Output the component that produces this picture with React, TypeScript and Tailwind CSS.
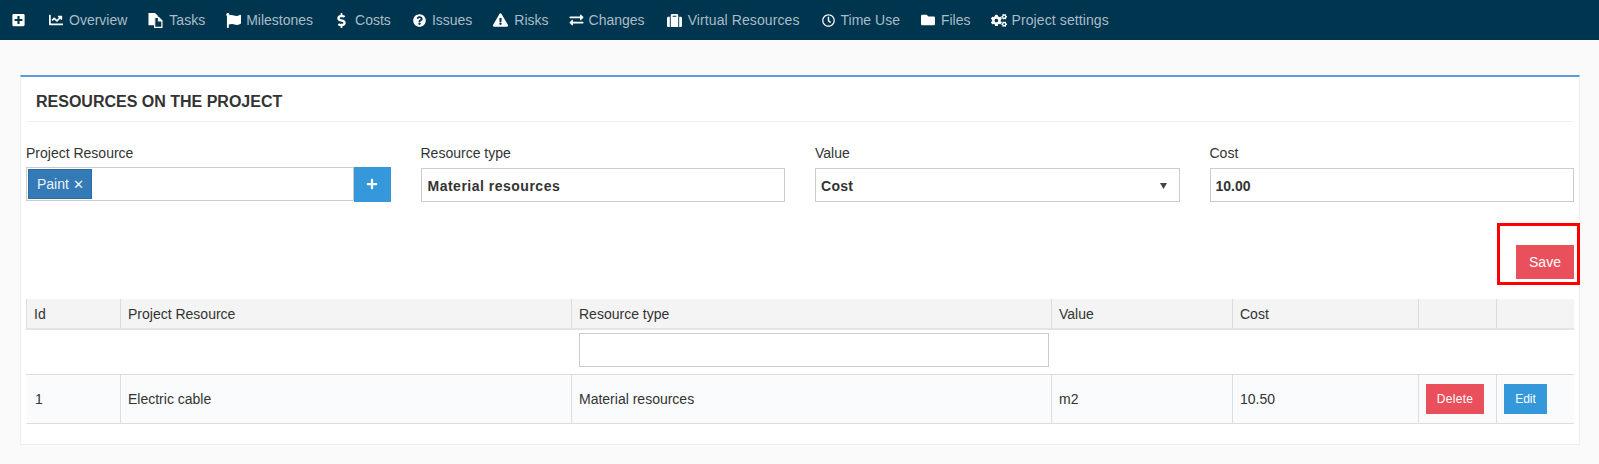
import React from "react";
import { FaPlusSquare, FaChartLine, FaFlag, FaDollarSign, FaQuestionCircle, FaExclamationTriangle, FaExchangeAlt, FaSuitcase, FaRegClock, FaFolder, FaCogs, FaPlus } from "react-icons/fa";

function FilesIcon({ className }: { className?: string }) {
  return (
    <svg viewBox="0 0 15 16" className={className} fill="currentColor">
      <path d="M0 0h7l3 3v2H6v8H0z" />
      <path fillRule="evenodd" d="M6 4h5l4 4v8H6zM7.300 5.300v9.400h6.400V9H10V5.300z" />
    </svg>
  );
}

const nav = [
  { label: "Overview", Icon: FaChartLine, icon: "w-[16px] h-[14px]", gap: "gap-[5px]", ml: "ml-[23px]", text: "" },
  { label: "Tasks", Icon: FilesIcon, icon: "w-[15px] h-[15px]", gap: "gap-[6px]", ml: "ml-[21px]", text: "" },
  { label: "Milestones", Icon: FaFlag, icon: "w-[15px] h-[15px]", gap: "gap-[5px]", ml: "ml-[21px]", text: "" },
  { label: "Costs", Icon: FaDollarSign, icon: "w-[9px] h-[15px]", gap: "gap-[9px]", ml: "ml-[24px]", text: "" },
  { label: "Issues", Icon: FaQuestionCircle, icon: "w-[13px] h-[13px]", gap: "gap-[6px]", ml: "ml-[22px]", text: "" },
  { label: "Risks", Icon: FaExclamationTriangle, icon: "w-[15px] h-[14px]", gap: "gap-[6px]", ml: "ml-[21px]", text: "" },
  { label: "Changes", Icon: FaExchangeAlt, icon: "w-[15px] h-[14px]", gap: "gap-[5px]", ml: "ml-[20px]", text: "" },
  { label: "Virtual Resources", Icon: FaSuitcase, icon: "w-[15px] h-[15px]", gap: "gap-[6px]", ml: "ml-[22px]", text: "tracking-[0.1px]" },
  { label: "Time Use", Icon: FaRegClock, icon: "w-[13px] h-[13px]", gap: "gap-[6px]", ml: "ml-[22px]", text: "" },
  { label: "Files", Icon: FaFolder, icon: "w-[14px] h-[14px]", gap: "gap-[6px]", ml: "ml-[21px]", text: "" },
  { label: "Project settings", Icon: FaCogs, icon: "w-[16px] h-[15px]", gap: "gap-[5px]", ml: "ml-[20px]", text: "tracking-[0.1px]" },
];

const inputBase = "h-[34px] border-[1.5px] border-[#cccccc] bg-white flex items-center pl-[5px] pt-[2px] font-bold text-[14px] text-[#333333]";
const th = "h-[31px] border-r border-r-[#dddddd] border-b-2 border-b-[#e4e4e4] bg-[#f4f4f4] pl-[7px] pt-[1px] text-left font-normal";
const td = "border-r border-r-[#dddddd] border-b border-b-[#dddddd] pl-[7px] bg-[#fafbfd]";

export default function App() {
  return (
    <div className="min-h-[464px] bg-[#fafafa] text-[14px] text-[#333333] font-['Liberation_Sans',Arial,sans-serif]">
      <nav className="h-[40px] bg-[#00354f] flex items-center pl-[12px]">
        <FaPlusSquare className="w-[13px] h-[14px] text-white" />
        {nav.map(({ label, Icon, icon, gap, ml, text }) => (
          <span key={label} className={`flex items-center ${gap} ${ml} text-[#a9bcc7]`}>
            <Icon className={`${icon} text-white`} />
            <span className={text}>{label}</span>
          </span>
        ))}
      </nav>

      <main className="pt-[35px] pb-[19px] pl-[20px] pr-[19px]">
        <section className="relative h-[370px] bg-white border border-[#eeeeee] border-t-2 border-t-[#5c9be0] px-[5px]">
          <h2 className="h-[45px] border-b border-[#eeeeee] flex items-center pl-[10px] pt-[5px] text-[16px] font-bold text-[#333333]">RESOURCES ON THE PROJECT</h2>

          <div className="grid grid-cols-4 gap-x-[30px] mt-[22px]">
            <div className="-mt-[1px]">
              <label className="block h-[24px] pt-[1px] leading-[18px]">Project Resource</label>
              <div className="flex h-[35px]">
                <div className="flex-1 h-[34px] border-[1.5px] border-[#cccccc] bg-white pl-[1px] pt-[1px] flex items-start">
                  <span className="h-[30px] w-[64px] bg-[#337ab7] border border-[#2e6da4] text-[#eef3f8] flex items-center pl-[8px] gap-[4px]">Paint <span className="text-[13px] leading-none font-['DejaVu_Sans',sans-serif]">✕</span></span>
                </div>
                <button className="w-[37px] bg-[#3498db] text-white flex items-center justify-center pb-[1px]">
                  <FaPlus className="w-[12px] h-[12px]" />
                </button>
              </div>
            </div>
            <div>
              <label className="block h-[24px] leading-[18px]">Resource type</label>
              <div className={`${inputBase} pl-[6px] tracking-[0.5px]`}>Material resources</div>
            </div>
            <div>
              <label className="block h-[24px] leading-[18px]">Value</label>
              <div className={`${inputBase} justify-between pr-[12px]`}>
                <span className="tracking-[0.3px]">Cost</span>
                <svg width="7" height="6" viewBox="0 0 7 6" className="fill-[#444444]"><path d="M0 0h7L3.500 6z" /></svg>
              </div>
            </div>
            <div>
              <label className="block h-[24px] leading-[18px]">Cost</label>
              <div className={inputBase}>10.00</div>
            </div>
          </div>

          <div className="flex justify-end mt-[43px]">
            <button className="w-[58px] h-[34px] bg-[#e9505c] text-white">Save</button>
          </div>
          <div className="absolute left-[1476px] top-[146px] w-[83px] h-[62px] border-[3px] border-[#ff0000]" />

          <table className="table-fixed border-separate border-spacing-0 mt-[20px] w-full">
            <colgroup>
              <col className="w-[95px]" />
              <col className="w-[451px]" />
              <col className="w-[480px]" />
              <col className="w-[181px]" />
              <col className="w-[186px]" />
              <col className="w-[78px]" />
              <col className="w-[77px]" />
            </colgroup>
            <thead>
              <tr>
                <th className={`${th} border-l border-l-[#dddddd]`}>Id</th>
                <th className={th}>Project Resource</th>
                <th className={th}>Resource type</th>
                <th className={th}>Value</th>
                <th className={th}>Cost</th>
                <th className={th}></th>
                <th className={`${th} border-r-0`}></th>
              </tr>
            </thead>
            <tbody>
              <tr className="h-[45px]">
                <td colSpan={2} className="border-b border-b-[#dddddd]"></td>
                <td className="pl-[7px] pb-[4px] border-b border-b-[#dddddd]"><div className="h-[34px] w-[470px] border-[1.5px] border-[#cccccc] bg-white" /></td>
                <td colSpan={4} className="border-b border-b-[#dddddd]"></td>
              </tr>
              <tr className="h-[49px]">
                <td className={`${td} border-l border-l-white pl-[8px] pt-[1px]`}>1</td>
                <td className={`${td} pt-[1px]`}>Electric cable</td>
                <td className={`${td} pt-[1px]`}>Material resources</td>
                <td className={`${td} pt-[1px]`}>m2</td>
                <td className={`${td} pt-[1px]`}>10.50</td>
                <td className={td}><button className="w-[58px] h-[30px] bg-[#e9505c] text-white text-[12px] block tracking-[0.3px]">Delete</button></td>
                <td className={`${td} border-r-0`}><button className="w-[43px] h-[30px] bg-[#3498db] text-white text-[12px] block">Edit</button></td>
              </tr>
            </tbody>
          </table>
        </section>
      </main>
    </div>
  );
}
